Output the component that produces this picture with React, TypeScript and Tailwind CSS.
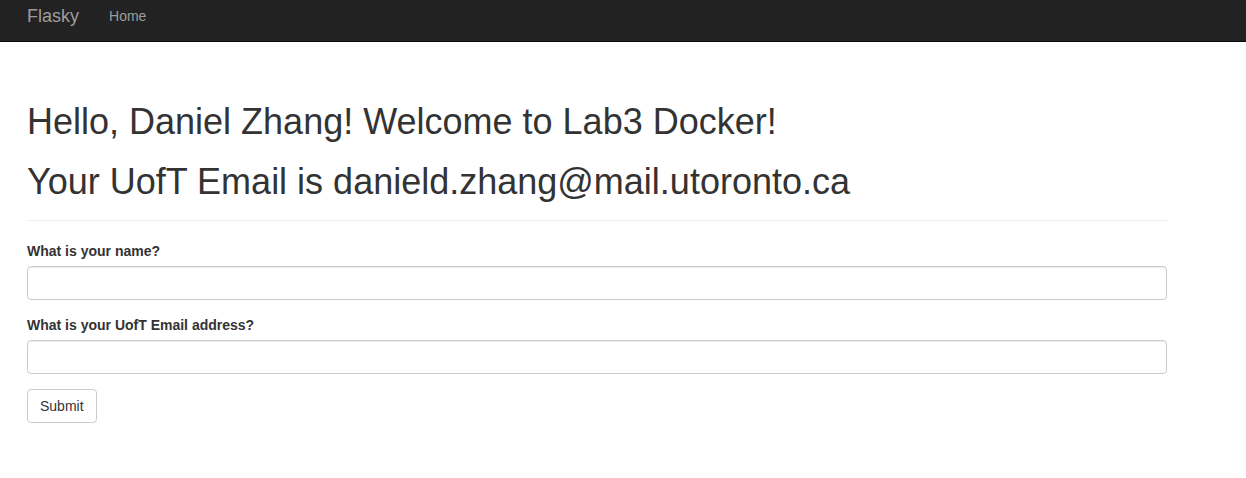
import React from 'react'

// Flasky page: dark navbar, page header with greeting, and a two-field form
export default function App() {
  const [name, setName] = React.useState('')
  const [email, setEmail] = React.useState('')

  return (
    <div className="min-h-screen bg-white text-[#333] font-['Liberation_Sans',Arial,sans-serif] text-[14px]">
      <nav className="h-[42px] bg-[#222] border-b border-[#080808]">
        <div className="flex pl-[27px] pt-[6px]">
          <a href="#" className="text-[18px] leading-[20px] text-[#9d9d9d] pr-[15px]">
            Flasky
          </a>
          <a href="#" className="text-[14px] leading-[20px] text-[#9d9d9d] px-[15px]">
            Home
          </a>
        </div>
      </nav>

      <div className="ml-[27px] w-[1140px] pt-[60px]">
        <div className="pb-[9px] mb-[20px] border-b border-[#eee]">
          <h1 className="text-[36px] leading-[39.6px] font-normal mb-[20px]">
            Hello, Daniel Zhang! Welcome to Lab3 Docker!
          </h1>
          <h1 className="text-[36px] leading-[39.6px] font-normal mb-[10px]">
            Your UofT Email is danield.zhang@mail.utoronto.ca
          </h1>
        </div>

        <form onSubmit={e => e.preventDefault()}>
          <div className="mb-[15px]">
            <label htmlFor="name" className="block font-bold leading-[20px] mb-[5px]">
              What is your name?
            </label>
            <input
              id="name"
              value={name}
              onChange={e => setName(e.target.value)}
              className="block w-full h-[34px] px-[12px] border border-[#ccc] rounded-[4px] shadow-[inset_0_1px_1px_rgba(0,0,0,0.075)] outline-none"
            />
          </div>
          <div className="mb-[15px]">
            <label htmlFor="email" className="block font-bold leading-[20px] mb-[5px]">
              What is your UofT Email address?
            </label>
            <input
              id="email"
              value={email}
              onChange={e => setEmail(e.target.value)}
              className="block w-full h-[34px] px-[12px] border border-[#ccc] rounded-[4px] shadow-[inset_0_1px_1px_rgba(0,0,0,0.075)] outline-none"
            />
          </div>
          <button
            type="submit"
            className="h-[34px] px-[12px] bg-white border border-[#ccc] rounded-[4px] leading-[20px] text-[#333]"
          >
            Submit
          </button>
        </form>
      </div>
    </div>
  )
}
